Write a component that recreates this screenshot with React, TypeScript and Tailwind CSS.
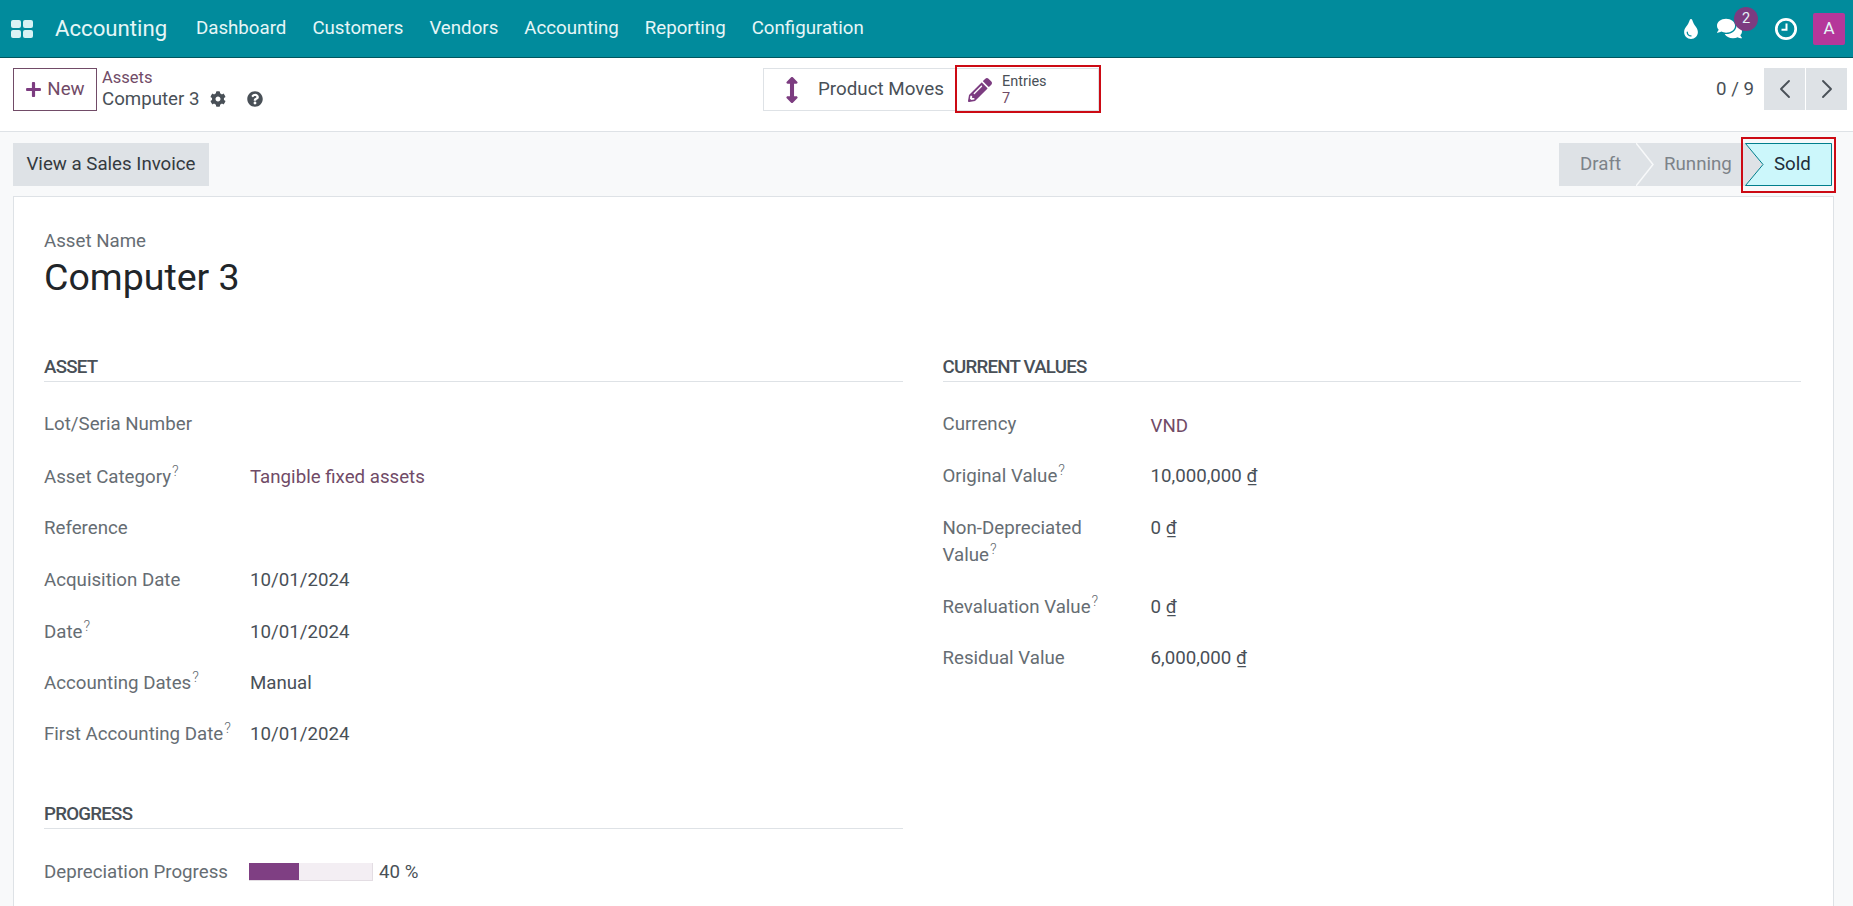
import React from 'react';
import { FaPlus, FaCog, FaQuestionCircle, FaPencilAlt, FaArrowsAltV, FaTint, FaComments } from 'react-icons/fa';
import { ChevronLeft, ChevronRight } from 'lucide-react';

const menus = ['Dashboard', 'Customers', 'Vendors', 'Accounting', 'Reporting', 'Configuration'];

const Help = () => <sup className="text-[14.5px] font-light ml-px">?</sup>;

const Label: React.FC<{ text: string; help?: boolean }> = ({ text, help }) => (
  <span className="text-[#666d73]">{text}{help && <Help />}</span>
);

const Section: React.FC<{ title: string }> = ({ title }) => (
  <div className="h-[27px] pt-[4px] flex items-center border-b border-[#dee2e6] box-content font-medium text-[#495057] tracking-[-0.75px]">{title}</div>
);

const leftRows = [
  { label: 'Lot/Seria Number', cls: '' },
  { label: 'Asset Category', help: true, value: 'Tangible fixed assets', link: true, cls: 'pt-[3px]' },
  { label: 'Reference', cls: '' },
  { label: 'Acquisition Date', value: '10/01/2024', cls: '' },
  { label: 'Date', help: true, value: '10/01/2024', cls: '' },
  { label: 'Accounting Dates', help: true, value: 'Manual', cls: 'pb-[2px]' },
  { label: 'First Accounting Date', help: true, value: '10/01/2024', cls: 'pb-[4px]' },
];

const rightRows = [
  { label: 'Currency', value: 'VND', link: true, cls: '' },
  { label: 'Original Value', help: true, value: '10,000,000 ₫', cls: '' },
  { label: 'Revaluation Value', help: true, value: '0 ₫', cls: '' },
  { label: 'Residual Value', value: '6,000,000 ₫', cls: 'pb-[2px]' },
];

export default function App() {
  return (
    <div className="h-screen w-full overflow-hidden bg-[#f8f9fa] font-[Roboto,sans-serif] text-[18.7px] text-[#495057]">
      {/* navbar */}
      <div className="h-[58px] bg-[#018b9c] border-b border-[#01565f] flex items-center text-[#e6f6f7]">
        <svg className="ml-[11px] w-[22px] h-[18px] text-[#d9f2f4]" viewBox="0 0 22 18" fill="currentColor">
          <rect x="0" y="0" width="10" height="8" rx="2" />
          <rect x="12" y="0" width="10" height="8" rx="2" />
          <rect x="0" y="10" width="10" height="8" rx="2" />
          <rect x="12" y="10" width="10" height="8" rx="2" />
        </svg>
        <div className="ml-[22px] w-[141px] text-[22.2px]">Accounting</div>
        <div className="flex gap-[26px]">
          {menus.map(m => <div key={m}>{m}</div>)}
        </div>
        <div className="ml-auto flex items-center pr-[8px]">
          <FaTint className="text-[20px] text-white mr-[16px]" />
          <div className="relative mr-[32px]">
            <FaComments className="text-[25px] text-white" />
            <div className="absolute -top-[9px] left-[17px] w-[24px] h-[24px] rounded-full bg-[#7c3c80] text-[14.5px] flex items-center justify-center">2</div>
          </div>
          <svg className="w-[24px] h-[24px] text-white mr-[15px]" viewBox="0 0 24 24" fill="none" stroke="currentColor">
            <circle cx="12" cy="12" r="9.7" strokeWidth="2.7" />
            <path d="M12.5 6.5 V12.8 H7.5" strokeWidth="2" />
          </svg>
          <div className="w-[32px] h-[32px] rounded-[2px] bg-[#b5379a] text-[17px] flex items-center justify-center">A</div>
        </div>
      </div>

      {/* control panel */}
      <div className="h-[74px] bg-white border-b border-[#dee2e6] flex items-start pl-[13px] pr-[6px] pt-[10px]">
        <div className="w-[750px] flex">
          <button className="h-[43px] w-[84px] border border-[#714b67] text-[#714b67] flex items-center justify-center gap-[5px]">
            <FaPlus className="text-[17px] text-[#7c3c80]" />New
          </button>
          <div className="ml-[5px] -mt-[1px]">
            <div className="text-[#714b67] text-[16.5px] h-[22px] leading-[22px]">Assets</div>
            <div className="flex items-center h-[22px] -mt-px">
              Computer 3
              <FaCog className="ml-[10px] text-[16px]" />
              <FaQuestionCircle className="ml-[21px] text-[16px]" />
            </div>
          </div>
        </div>
        <div className="flex h-[43px] border border-[#dee2e6] w-[336px]">
          <div className="w-[192px] flex items-center">
            <FaArrowsAltV className="ml-[15px] text-[26px] text-[#7c3c80]" />
            <span className="ml-[13px] -mt-[1px] text-[18.8px] whitespace-nowrap">Product Moves</span>
          </div>
          <div className="relative flex-1 flex items-center">
            <FaPencilAlt className="ml-[12px] text-[24px] text-[#7c3c80]" />
            <div className="ml-[10px] text-[14.5px] leading-[17px]">
              <div>Entries</div>
              <div className="text-[#714b67]">7</div>
            </div>
            <div className="absolute -left-[1px] -top-[4px] -right-[3px] -bottom-[3px] border-2 border-[#cc0a14]" />
          </div>
        </div>
        <div className="ml-auto flex items-center">
          <span className="mr-[10px]">0 / 9</span>
          <div className="w-[41px] h-[42px] bg-[#dee2e6] flex items-center justify-center mr-px"><ChevronLeft className="w-[32px] h-[32px]" strokeWidth={1.4} /></div>
          <div className="w-[41px] h-[42px] bg-[#dee2e6] flex items-center justify-center"><ChevronRight className="w-[32px] h-[32px]" strokeWidth={1.4} /></div>
        </div>
      </div>

      {/* status row */}
      <div className="h-[64px] flex items-start justify-between pt-[11px] pl-[13px] pr-[21px]">
        <button className="h-[43px] w-[196px] bg-[#dee2e6] text-[#343a40] whitespace-nowrap">View a Sales Invoice</button>
        <div className="flex h-[43px] text-[#7d8389]">
          <div className="w-[78px] bg-[#dee2e6] pl-[21px] flex items-center">Draft</div>
          <div className="relative w-[108px] bg-[#dee2e6] pl-[27px] flex items-center">
            Running
            <svg className="absolute left-[-1px] top-0 w-[18px] h-[43px]" viewBox="0 0 18 43" fill="none" stroke="#f8f9fa" strokeWidth="1.5">
              <path d="M0 0 L17 21.5 L0 43" />
            </svg>
          </div>
          <div className="relative w-[87px] bg-[#dee2e6] pl-[29px] flex items-center text-[#1f2d3a]">
            <svg className="absolute inset-0 w-[87px] h-[43px]" viewBox="0 0 87 43">
              <path d="M0.5 0.5 H86.5 V42.5 H0.5 L18 21.5 Z" fill="#ccf7fb" stroke="#017e8c" />
            </svg>
            <span className="relative">Sold</span>
            <div className="absolute -left-[4px] -top-[6px] -right-[4px] -bottom-[7px] border-2 border-[#cc0a14]" />
          </div>
        </div>
      </div>

      {/* sheet */}
      <div className="ml-[13px] mr-[19px] h-[720px] bg-white border border-[#dee2e6] pl-[30px] pr-[32px] pt-[32px]">
        <div className="h-[24px] leading-[24px] text-[#666d73]">Asset Name</div>
        <div className="h-[50px] leading-[50px] -mt-px text-[37.5px] text-[#212529]">Computer 3</div>
        <div className="mt-[48px] grid grid-cols-2 gap-x-[40px]">
          <div>
            <Section title="ASSET" />
            <div className="mt-[16px]">
              {leftRows.map(r => (
                <div key={r.label} className={`h-[52px] flex items-center ${r.cls}`}>
                  <div className="w-[206px]"><Label text={r.label} help={r.help} /></div>
                  <div className={r.link ? 'text-[#714b67]' : ''}>{r.value}</div>
                </div>
              ))}
            </div>
            <div className="mt-[35px]"><Section title="PROGRESS" /></div>
            <div className="mt-[17px] h-[52px] flex items-center">
              <div className="w-[205px]"><Label text="Depreciation Progress" /></div>
              <div className="w-[124px] h-[18px] bg-[#f3eef3] border-r border-b border-[#e3dde3]">
                <div className="h-full bg-[#7f3f83]" style={{ width: '41%' }} />
              </div>
              <span className="ml-[6px]">40 %</span>
            </div>
          </div>
          <div>
            <Section title="CURRENT VALUES" />
            <div className="mt-[16px]">
              {rightRows.slice(0, 2).map(r => (
                <div key={r.label} className="h-[52px] flex items-center">
                  <div className="w-[208px]"><Label text={r.label} help={r.help} /></div>
                  <div className={r.link ? 'text-[#714b67] pt-[5px]' : ''}>{r.value}</div>
                </div>
              ))}
              <div className="h-[79px] flex items-start pt-[13px]">
                <div className="w-[208px] leading-[27px]">
                  <div className="text-[#666d73]">Non-Depreciated</div>
                  <Label text="Value" help />
                </div>
                <div className="leading-[26px]">0 ₫</div>
              </div>
              {rightRows.slice(2).map(r => (
                <div key={r.label} className={`h-[52px] flex items-center ${r.cls}`}>
                  <div className="w-[208px]"><Label text={r.label} help={r.help} /></div>
                  <div>{r.value}</div>
                </div>
              ))}
            </div>
          </div>
        </div>
      </div>
    </div>
  );
}
